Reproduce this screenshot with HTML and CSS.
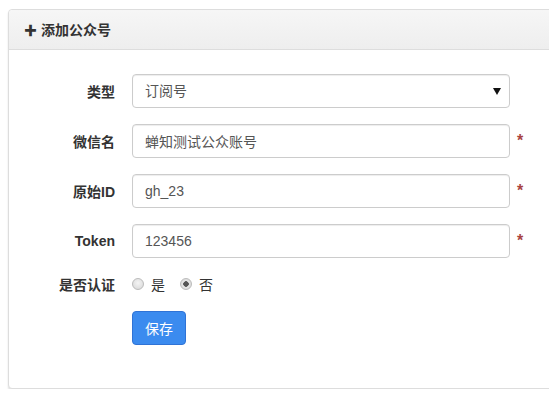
FILE: index.html
```html
<!DOCTYPE html>
<html lang="zh-CN">
<head>
<meta charset="UTF-8" />
<title>添加公众号</title>
<link rel="stylesheet" href="styles.css">
</head>
<body>

<div class="panel">
  <div class="panel-heading">
    <span class="plus">&#10010;</span> 添加公众号
  </div>
  <div class="panel-body">
    <form class="form">

      <div class="row">
        <label class="label">类型</label>
        <div class="select-wrap">
          <select class="control">
            <option>订阅号</option>
            <option>服务号</option>
          </select>
          <span class="caret"></span>
        </div>
      </div>

      <div class="row">
        <label class="label">微信名</label>
        <input class="control" type="text" value="蝉知测试公众账号" />
        <span class="required">*</span>
      </div>

      <div class="row">
        <label class="label">原始ID</label>
        <input class="control" type="text" value="gh_23" />
        <span class="required">*</span>
      </div>

      <div class="row">
        <label class="label">Token</label>
        <input class="control" type="text" value="123456" />
        <span class="required">*</span>
      </div>

      <div class="row radio-row">
        <label class="label">是否认证</label>
        <label class="radio"><input type="radio" name="certified" /> 是</label>
        <label class="radio"><input type="radio" name="certified" checked /> 否</label>
      </div>

      <div class="row button-row">
        <button class="btn" type="button">保存</button>
      </div>

    </form>
  </div>
</div>

</body>
</html>
```

FILE: styles.css
```css
body {
  margin: 0;
  background: #fff;
  color: #333;
  font-family: "Liberation Sans", "Noto Sans CJK SC", sans-serif;
  font-size: 14px;
  overflow: hidden;
}
.panel {
  margin: 9px -4px 0 8px;
  border: 1px solid #ddd;
  border-radius: 4px;
  background: #fff;
  box-shadow: 0 2px 2px rgba(0,0,0,0.12);
}
.panel-heading {
  height: 40px;
  line-height: 40px;
  padding: 0 15px;
  box-sizing: border-box;
  background: linear-gradient(#f6f6f6, #eeeeee);
  border-bottom: 1px solid #ddd;
  border-radius: 4px 4px 0 0;
  font-weight: bold;
  color: #333;
}
.plus {
  font-size: 13px;
}
.panel-body {
  padding: 24px 0 43px 0;
}
.row {
  display: flex;
  align-items: center;
  margin-bottom: 16px;
}
.label {
  width: 106px;
  margin-right: 17px;
  text-align: right;
  font-weight: bold;
  color: #333;
}
.control {
  width: 378px;
  height: 34px;
  box-sizing: border-box;
  padding: 6px 12px;
  border: 1px solid #ccc;
  border-radius: 4px;
  background: #fff;
  color: #555;
  font-family: inherit;
  font-size: 14px;
  box-shadow: inset 0 1px 1px rgba(0,0,0,0.075);
}
.select-wrap {
  position: relative;
}
select.control {
  appearance: none;
  -webkit-appearance: none;
}
.caret {
  position: absolute;
  right: 9px;
  top: 14px;
  width: 0;
  height: 0;
  border-left: 4px solid transparent;
  border-right: 4px solid transparent;
  border-top: 7px solid #111;
  pointer-events: none;
}
.required {
  margin-left: 7px;
  color: #a94442;
  font-weight: bold;
  font-size: 16px;
}
.radio-row {
  height: 20px;
  margin-bottom: 17px;
}
.radio {
  display: flex;
  align-items: center;
  margin-right: 15px;
  color: #333;
}
.radio input {
  appearance: none;
  -webkit-appearance: none;
  width: 12px;
  height: 12px;
  margin: 0 7px 0 0;
  border: 1px solid #bbb;
  border-radius: 50%;
  background: radial-gradient(circle at 50% 40%, #f4f4f4, #d6d6d6);
}
.radio input:checked {
  background: radial-gradient(circle, #555 0, #555 2.5px, #e6e6e6 3px, #d2d2d2 100%);
}
.button-row {
  margin: 0 0 0 123px;
}
.btn {
  height: 34px;
  padding: 0 12px;
  border: 1px solid #2f73d6;
  border-radius: 4px;
  background: #3b8bef;
  color: #fff;
  font-family: inherit;
  font-size: 14px;
}
```
